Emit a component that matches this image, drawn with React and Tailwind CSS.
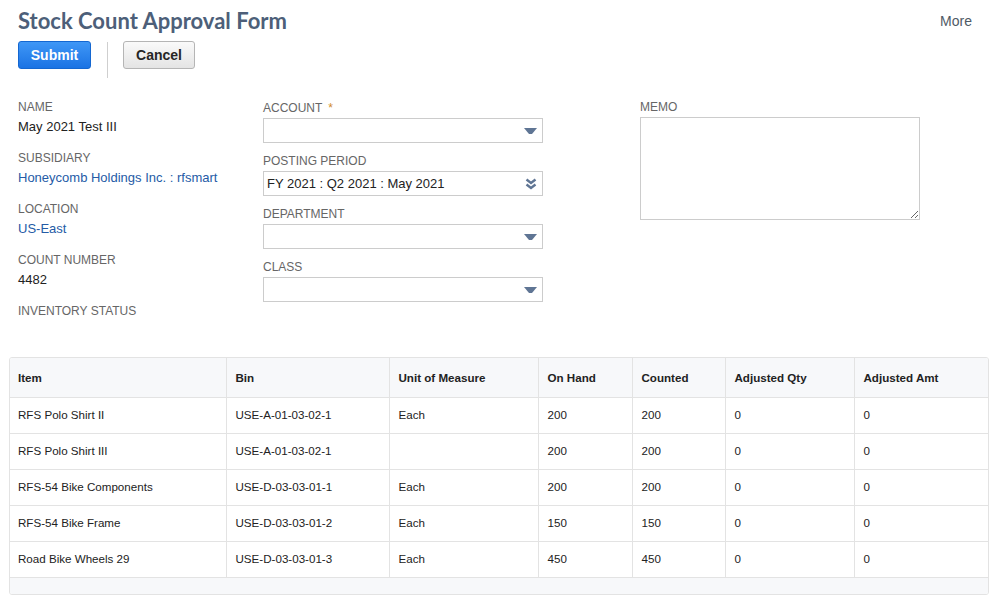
import React from "react";

const Arrow = () => (
  <svg width="13" height="6" viewBox="0 0 13 6" className="block">
    <path d="M0 0 H13 L8 6 H5 Z" fill="#5f7594" />
  </svg>
);

const DoubleChevron = () => (
  <svg width="12" height="12" viewBox="0 0 12 12" className="block">
    <path d="M1.5 1.5 L6 5 L10.5 1.5" fill="none" stroke="#5f7594" strokeWidth="2.4" />
    <path d="M1.5 6.5 L6 10 L10.5 6.5" fill="none" stroke="#5f7594" strokeWidth="2.4" />
  </svg>
);

const rows = [
  ["RFS Polo Shirt II", "USE-A-01-03-02-1", "Each", "200", "200", "0", "0"],
  ["RFS Polo Shirt III", "USE-A-01-03-02-1", "", "200", "200", "0", "0"],
  ["RFS-54 Bike Components", "USE-D-03-03-01-1", "Each", "200", "200", "0", "0"],
  ["RFS-54 Bike Frame", "USE-D-03-03-01-2", "Each", "150", "150", "0", "0"],
  ["Road Bike Wheels 29", "USE-D-03-03-01-3", "Each", "450", "450", "0", "0"],
];

const headers = ["Item", "Bin", "Unit of Measure", "On Hand", "Counted", "Adjusted Qty", "Adjusted Amt"];
const widths = [216, 163, 149, 94, 93, 129, 134];

function Field({ label, value, link }) {
  return (
    <div className="h-[51px]">
      <div className="h-[14px] leading-[14px] text-[12px] text-[#666]">{label}</div>
      {value ? (
        <div className={"mt-[5px] h-[16px] leading-[16px] text-[13px] " + (link ? "text-[#255ba6]" : "text-[#222]")}>
          {value}
        </div>
      ) : null}
    </div>
  );
}

function Select({ label, required, value, double }) {
  return (
    <div className="mb-[11px]">
      <div className="h-[14px] leading-[14px] text-[12px] text-[#666]">
        {label}
        {required ? <span className="ml-[6px] text-[#d18b2c]">*</span> : null}
      </div>
      <div className="mt-[3px] h-[25px] border border-[#cccccc] bg-white flex items-center justify-between pl-[3px] pr-[5px]">
        <span className="text-[13px] text-[#222] leading-[16px]">{value}</span>
        <span>{double ? <DoubleChevron /> : <Arrow />}</span>
      </div>
    </div>
  );
}

export default function App() {
  return (
    <div className="w-[993px] h-[600px] bg-white overflow-hidden font-['Liberation_Sans',Arial,sans-serif]">
      <div className="pl-[18px] pr-[21px] pt-[7px] flex items-start justify-between">
        <h1 className="h-[28px] leading-[28px] text-[22px] font-bold text-[#4d5f79] font-['Lato',sans-serif]">
          Stock Count Approval Form
        </h1>
        <div className="mt-[4px] text-[14px] leading-[20px] text-[#4f5a66]">More</div>
      </div>
      <div className="pl-[18px] mt-[6px] flex items-start">
        <button className="w-[73px] h-[28px] rounded-[3px] border border-[#1467d1] bg-gradient-to-b from-[#3f97f6] to-[#1a73e4] text-white text-[14px] font-bold">
          Submit
        </button>
        <div className="ml-[16px] mr-[15px] mt-[1px] w-px h-[36px] bg-[#cfcfcf]" />
        <button className="w-[72px] h-[28px] rounded-[3px] border border-[#b5b5b5] bg-gradient-to-b from-[#fafafa] to-[#e4e4e4] text-[#262626] text-[14px] font-bold">
          Cancel
        </button>
      </div>

      <div className="mt-[22px] pl-[18px] flex items-start">
        <div className="w-[245px]">
          <Field label="NAME" value="May 2021 Test III" />
          <Field label="SUBSIDIARY" value="Honeycomb Holdings Inc. : rfsmart" link />
          <Field label="LOCATION" value="US-East" link />
          <Field label="COUNT NUMBER" value="4482" />
          <Field label="INVENTORY STATUS" />
        </div>
        <div className="w-[280px] mt-[1px]">
          <Select label="ACCOUNT" required value="" />
          <Select label="POSTING PERIOD" value="FY 2021 : Q2 2021 : May 2021" double />
          <Select label="DEPARTMENT" value="" />
          <Select label="CLASS" value="" />
        </div>
        <div className="ml-[97px] w-[280px]">
          <div className="h-[14px] leading-[14px] text-[12px] text-[#666]">MEMO</div>
          <textarea className="mt-[3px] block w-[280px] h-[103px] border border-[#cccccc] outline-none" />
        </div>
      </div>

      <div className="mt-[2px] ml-[9px] w-[980px] border border-[#e3e3e3] rounded-[3px] overflow-hidden">
        <table className="w-full table-fixed border-collapse">
          <colgroup>
            {widths.map((w, i) => (
              <col key={i} style={{ width: w }} />
            ))}
          </colgroup>
          <thead>
            <tr className="bg-[#f7f8fa]">
              {headers.map((h, i) => (
                <th
                  key={i}
                  className={
                    "h-[39px] text-left align-middle pr-[9px] text-[11.6px] font-bold text-[#222] border-b border-[#e3e3e3] " +
                    (i === 0 ? "pl-[8px] " : "pl-[9px] ") +
                    (i < 6 ? "border-r" : "")
                  }
                >
                  {h}
                </th>
              ))}
            </tr>
          </thead>
          <tbody>
            {rows.map((r, ri) => (
              <tr key={ri}>
                {r.map((c, ci) => (
                  <td
                    key={ci}
                    className={
                      "h-[36px] align-middle pr-[9px] text-[11.6px] text-[#222] border-b border-[#e3e3e3] " +
                      (ci === 0 ? "pl-[8px] " : "pl-[9px] ") +
                      (ci < 6 ? "border-r" : "")
                    }
                  >
                    {c}
                  </td>
                ))}
              </tr>
            ))}
          </tbody>
        </table>
        <div className="h-[16px] bg-[#f7f8fa]" />
      </div>
    </div>
  );
}
